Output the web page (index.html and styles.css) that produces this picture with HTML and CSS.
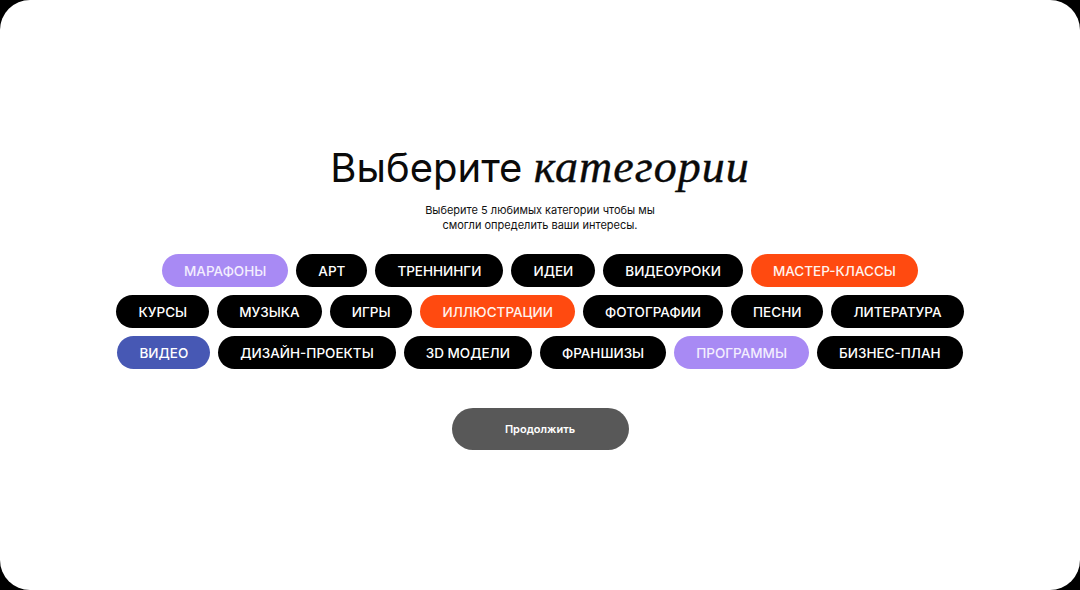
FILE: index.html
```html
<!DOCTYPE html>
<html lang="ru">
<head>
<meta charset="utf-8">
<link rel="stylesheet" href="styles.css">
</head>
<body>
<main class="card">
  <h1 class="title">Выберите <em>категории</em></h1>
  <p class="subtitle">Выберите 5 любимых категории чтобы мы<br>смогли определить ваши интересы.</p>
  <div class="chips">
    <div class="row">
      <span class="chip lavender">МАРАФОНЫ</span>
      <span class="chip">АРТ</span>
      <span class="chip">ТРЕННИНГИ</span>
      <span class="chip">ИДЕИ</span>
      <span class="chip">ВИДЕОУРОКИ</span>
      <span class="chip orange">МАСТЕР-КЛАССЫ</span>
    </div>
    <div class="row">
      <span class="chip">КУРСЫ</span>
      <span class="chip">МУЗЫКА</span>
      <span class="chip">ИГРЫ</span>
      <span class="chip orange">ИЛЛЮСТРАЦИИ</span>
      <span class="chip">ФОТОГРАФИИ</span>
      <span class="chip">ПЕСНИ</span>
      <span class="chip">ЛИТЕРАТУРА</span>
    </div>
    <div class="row">
      <span class="chip blue">ВИДЕО</span>
      <span class="chip">ДИЗАЙН-ПРОЕКТЫ</span>
      <span class="chip">3D МОДЕЛИ</span>
      <span class="chip">ФРАНШИЗЫ</span>
      <span class="chip lavender">ПРОГРАММЫ</span>
      <span class="chip">БИЗНЕС-ПЛАН</span>
    </div>
  </div>
  <button class="continue">Продолжить</button>
</main>
</body>
</html>
```
FILE: styles.css
```css
html, body {
  margin: 0;
  padding: 0;
  background: #000;
}
body {
  width: 1080px;
  height: 590px;
  overflow: hidden;
  font-family: Inter, "Noto Sans", sans-serif;
}
.card {
  box-sizing: border-box;
  width: 1080px;
  height: 590px;
  background: #fff;
  border-radius: 30px;
  display: flex;
  flex-direction: column;
  align-items: center;
  padding-top: 145px;
}
.title {
  margin: 0;
  font-size: 40px;
  line-height: 44px;
  font-weight: 400;
  color: #0a0a0a;
}
.title em {
  font-family: "Liberation Serif", "DejaVu Serif", serif;
  font-style: italic;
  font-size: 46px;
  letter-spacing: 1px;
  -webkit-text-stroke: 0.4px #0a0a0a;
}
.subtitle {
  margin: 13px 0 0;
  font-size: 11px;
  line-height: 15px;
  text-align: center;
  color: #111;
}
.chips {
  margin-top: 21px;
  display: flex;
  flex-direction: column;
  align-items: center;
  gap: 8px;
}
.row {
  display: flex;
  gap: 8px;
}
.chip {
  height: 33px;
  padding: 0 22px;
  border-radius: 17px;
  background: #000;
  color: #fff;
  font-size: 13.5px;
  font-weight: 500;
  display: flex;
  align-items: center;
  white-space: nowrap;
}
.chip.lavender {
  background: #a88af4;
  color: #f3eefe;
}
.chip.orange {
  background: #ff4a10;
  color: #fff3ee;
}
.chip.blue {
  background: #4758b4;
}
.continue {
  margin-top: 39px;
  width: 177px;
  height: 42px;
  border: 0;
  border-radius: 21px;
  background: #585858;
  color: #fff;
  font-family: Inter, "Noto Sans", sans-serif;
  font-size: 11px;
  font-weight: 600;
}
```
